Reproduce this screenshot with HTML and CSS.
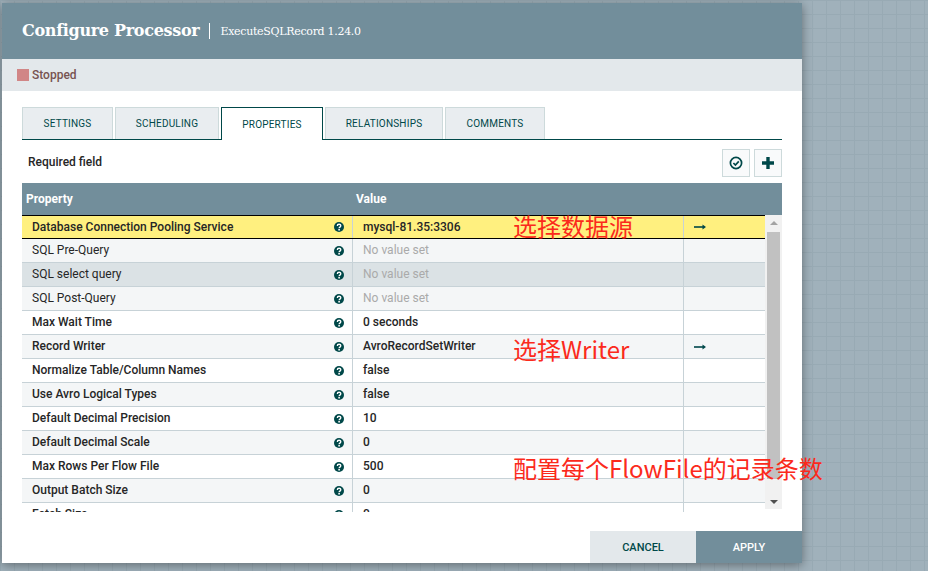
FILE: index.html
```html
<!DOCTYPE html>
<html lang="en">

<head>
    <meta charset="UTF-8">
    <meta name="viewport" content="width=device-width, initial-scale=1.0">
    <title>Configure Processor</title>
    <link rel="stylesheet" href="styles.css">
</head>

<body>
    <div class="canvas">
        <div class="dialog">
            <header class="dialog-head">
                <h1>Configure Processor</h1>
                <span class="subtitle">ExecuteSQLRecord 1.24.0</span>
            </header>
            <div class="status"><span class="status-box"></span>Stopped</div>
            <main class="dialog-body">
                <ul class="tabs">
                    <li class="tab tab-settings">SETTINGS</li>
                    <li class="tab tab-scheduling">SCHEDULING</li>
                    <li class="tab tab-properties active">PROPERTIES</li>
                    <li class="tab tab-relationships">RELATIONSHIPS</li>
                    <li class="tab tab-comments">COMMENTS</li>
                </ul>
                <div class="toolbar">
                    <span class="required">Required field</span>
                    <div class="tool-buttons">
                        <button class="tool-btn" aria-label="Verify">
                            <svg width="14" height="14" viewBox="0 0 14 14">
                                <circle cx="7" cy="7" r="5.6" fill="none" stroke="#004849" stroke-width="1.7" />
                                <path d="M4.4 7l2 2 3.4-3.6" fill="none" stroke="#004849" stroke-width="1.7" />
                            </svg>
                        </button>
                        <button class="tool-btn" aria-label="Add">
                            <svg width="14" height="14" viewBox="0 0 14 14">
                                <path d="M7 1v12M1 7h12" fill="none" stroke="#004849" stroke-width="3.4" />
                            </svg>
                        </button>
                    </div>
                </div>
                <div class="table-head">
                    <span class="head-property">Property</span>
                    <span class="head-value">Value</span>
                </div>
                <div class="table-wrap">
                    <div class="rows" id="rows">
                        <div class="row selected">
                            <div class="cell-name"><span>Database Connection Pooling Service</span><svg class="help"><use href="#help" /></svg></div>
                            <div class="cell-value">mysql-81.35:3306</div>
                            <div class="cell-action"><svg class="arrow"><use href="#arrow" /></svg></div>
                        </div>
                        <div class="row odd optional">
                            <div class="cell-name"><span>SQL Pre-Query</span><svg class="help"><use href="#help" /></svg></div>
                            <div class="cell-value unset">No value set</div>
                            <div class="cell-action"></div>
                        </div>
                        <div class="row hover optional">
                            <div class="cell-name"><span>SQL select query</span><svg class="help"><use href="#help" /></svg></div>
                            <div class="cell-value unset">No value set</div>
                            <div class="cell-action"></div>
                        </div>
                        <div class="row odd optional">
                            <div class="cell-name"><span>SQL Post-Query</span><svg class="help"><use href="#help" /></svg></div>
                            <div class="cell-value unset">No value set</div>
                            <div class="cell-action"></div>
                        </div>
                        <div class="row">
                            <div class="cell-name"><span>Max Wait Time</span><svg class="help"><use href="#help" /></svg></div>
                            <div class="cell-value">0 seconds</div>
                            <div class="cell-action"></div>
                        </div>
                        <div class="row odd">
                            <div class="cell-name"><span>Record Writer</span><svg class="help"><use href="#help" /></svg></div>
                            <div class="cell-value">AvroRecordSetWriter</div>
                            <div class="cell-action"><svg class="arrow"><use href="#arrow" /></svg></div>
                        </div>
                        <div class="row">
                            <div class="cell-name"><span>Normalize Table/Column Names</span><svg class="help"><use href="#help" /></svg></div>
                            <div class="cell-value">false</div>
                            <div class="cell-action"></div>
                        </div>
                        <div class="row odd">
                            <div class="cell-name"><span>Use Avro Logical Types</span><svg class="help"><use href="#help" /></svg></div>
                            <div class="cell-value">false</div>
                            <div class="cell-action"></div>
                        </div>
                        <div class="row">
                            <div class="cell-name"><span>Default Decimal Precision</span><svg class="help"><use href="#help" /></svg></div>
                            <div class="cell-value">10</div>
                            <div class="cell-action"></div>
                        </div>
                        <div class="row odd">
                            <div class="cell-name"><span>Default Decimal Scale</span><svg class="help"><use href="#help" /></svg></div>
                            <div class="cell-value">0</div>
                            <div class="cell-action"></div>
                        </div>
                        <div class="row">
                            <div class="cell-name"><span>Max Rows Per Flow File</span><svg class="help"><use href="#help" /></svg></div>
                            <div class="cell-value">500</div>
                            <div class="cell-action"></div>
                        </div>
                        <div class="row odd">
                            <div class="cell-name"><span>Output Batch Size</span><svg class="help"><use href="#help" /></svg></div>
                            <div class="cell-value">0</div>
                            <div class="cell-action"></div>
                        </div>
                        <div class="row">
                            <div class="cell-name"><span>Fetch Size</span><svg class="help"><use href="#help" /></svg></div>
                            <div class="cell-value">0</div>
                            <div class="cell-action"></div>
                        </div>
                    </div>
                    <div class="scrollbar">
                        <span class="scroll-up"></span>
                        <span class="scroll-thumb"></span>
                        <span class="scroll-down"></span>
                    </div>
                </div>
            </main>
            <footer class="dialog-foot">
                <button class="btn-cancel">CANCEL</button>
                <button class="btn-apply">APPLY</button>
            </footer>
        </div>

        <!-- notes drawn on top of the screenshot -->
        <span class="note note-source">选择数据源</span>
        <span class="note note-writer">选择Writer</span>
        <span class="note note-count">配置每个FlowFile的记录条数</span>
    </div>

    <svg width="0" height="0" class="defs">
        <symbol id="help" viewBox="0 0 10 10">
            <circle cx="5" cy="5" r="5" fill="#004849" />
            <path d="M3.3 3.9c0-2.2 3.5-2.2 3.5-.1 0 1.3-1.7 1.3-1.7 2.5" fill="none" stroke="#fff" stroke-width="1.3" />
            <rect x="4.3" y="7" width="1.6" height="1.5" fill="#fff" />
        </symbol>
        <symbol id="arrow" viewBox="0 0 12 8">
            <path d="M0 4h9" stroke="#004849" stroke-width="1.6" fill="none" />
            <path d="M8.5 1.5L12 4 8.5 6.5z" fill="#004849" />
        </symbol>
    </svg>
</body>

</html>
```

FILE: styles.css
```css
* {
    box-sizing: border-box;
}

body {
    margin: 0;
    font-family: Roboto, "Noto Sans CJK SC", sans-serif;
    overflow: hidden;
}

.defs {
    position: absolute;
}

.canvas {
    position: relative;
    width: 928px;
    height: 571px;
    background-color: #a0b1bb;
    background-image:
        linear-gradient(#98aab4 1px, transparent 1px),
        linear-gradient(90deg, #98aab4 1px, transparent 1px);
    background-size: 14px 14px;
    overflow: hidden;
}

.dialog {
    position: absolute;
    left: 2px;
    top: 3px;
    width: 800px;
    height: 560px;
    background: #fff;
    display: flex;
    flex-direction: column;
    box-shadow: 0 2px 10px rgba(0, 0, 0, 0.4);
}

.dialog-head {
    height: 56px;
    background: #728e9b;
    color: #fff;
    display: flex;
    align-items: center;
    padding-left: 20px;
}

.dialog-head h1 {
    margin: 0;
    font-family: "DejaVu Serif", serif;
    font-size: 16px;
    font-weight: bold;
    letter-spacing: -0.3px;
    padding-right: 10px;
    border-right: 1px solid #fff;
    line-height: 16px;
}

.subtitle {
    font-family: "DejaVu Serif", serif;
    font-size: 11px;
    letter-spacing: -0.3px;
    padding-left: 10px;
}

.status {
    height: 32px;
    background: #e3e8eb;
    display: flex;
    align-items: center;
    padding-left: 15px;
    font-size: 12px;
    font-weight: 500;
    color: #775351;
}

.status-box {
    width: 12px;
    height: 12px;
    background: #d18686;
    margin-right: 3px;
}

.dialog-body {
    flex: 1;
    padding: 16px 20px 0;
    min-height: 0;
}

.tabs {
    list-style: none;
    margin: 0;
    padding: 0;
    display: flex;
    gap: 2px;
    height: 33px;
    border-bottom: 1px solid #004849;
}

.tab {
    height: 32px;
    background: #e9edf0;
    border: 1px solid #cddadb;
    border-bottom: 0;
    color: #004849;
    font-size: 10px;
    letter-spacing: 0.2px;
    display: flex;
    align-items: center;
    justify-content: center;
}

.tab-settings {
    width: 91px;
}

.tab-scheduling {
    width: 104px;
}

.tab-properties {
    width: 102px;
}

.tab-relationships {
    width: 118px;
}

.tab-comments {
    width: 100px;
}

.tab.active {
    height: 33px;
    background: #fff;
    border: 1px solid #004849;
    border-bottom: 0;
}

.toolbar {
    height: 43px;
    display: flex;
    align-items: center;
    justify-content: space-between;
    padding: 0 0 8px 6px;
}

.required {
    font-size: 12px;
    font-weight: 500;
    color: #262626;
    padding-top: 8px;
}

.tool-buttons {
    display: flex;
    gap: 4px;
    padding-top: 10px;
}

.tool-btn {
    width: 28px;
    height: 28px;
    padding: 0;
    background: #f9fafb;
    border: 1px solid #cddadb;
    display: flex;
    align-items: center;
    justify-content: center;
}

.table-head {
    height: 32px;
    background: #728e9b;
    color: #fff;
    font-size: 12px;
    font-weight: 700;
    display: flex;
    align-items: center;
}

.head-property {
    width: 334px;
    padding-left: 4px;
}

.table-wrap {
    height: 297px;
    display: flex;
    overflow: hidden;
}

.rows {
    width: 743px;
}

.row {
    height: 24px;
    display: flex;
    background: #fff;
    border-bottom: 1px solid #c7d2d7;
    font-size: 12px;
    font-weight: 500;
    color: #262626;
    line-height: 23px;
}

.row.odd {
    background: #f4f6f7;
}

.row.hover {
    background: #dbe2e5;
}

.row.selected {
    background: #fff07f;
    border-top: 1px solid #000;
    border-bottom: 1px solid #000;
    line-height: 22px;
}

.row.optional .cell-name span {
    font-weight: 400;
}

.cell-name {
    width: 330px;
    display: flex;
    justify-content: space-between;
    align-items: center;
    padding: 0 8px 0 10px;
}

.cell-value {
    width: 331px;
    padding-left: 10px;
    border-left: 1px solid #c7d2d7;
}

.cell-value.unset {
    color: #aaa;
    font-weight: 400;
}

.cell-action {
    flex: 1;
    border-left: 1px solid #c7d2d7;
    padding-left: 10px;
    display: flex;
    align-items: center;
}

.help {
    width: 10px;
    height: 10px;
}

.arrow {
    width: 12px;
    height: 8px;
}

.scrollbar {
    width: 17px;
    height: 294px;
    background: #f1f1f1;
    display: flex;
    flex-direction: column;
    align-items: center;
}

.scroll-up {
    margin-top: 6px;
    border: 4px solid transparent;
    border-top: 0;
    border-bottom: 4px solid #a3a3a3;
}

.scroll-thumb {
    width: 13px;
    height: 247px;
    margin-top: 7px;
    background: #c1c1c1;
}

.scroll-down {
    margin-top: 21px;
    border: 4px solid transparent;
    border-bottom: 0;
    border-top: 4px solid #505050;
}

.dialog-foot {
    height: 32px;
    display: flex;
    justify-content: flex-end;
}

.dialog-foot button {
    width: 106px;
    border: 0;
    font-family: inherit;
    font-size: 11px;
    font-weight: 500;
}

.btn-cancel {
    background: #e3e8eb;
    color: #004849;
}

.btn-apply {
    background: #728e9b;
    color: #fff;
}

.note {
    position: absolute;
    left: 513px;
    color: #fb2a1c;
    font-size: 24px;
    line-height: 30px;
    white-space: nowrap;
    font-family: "Noto Sans CJK SC", sans-serif;
}

.note-source {
    top: 211px;
}

.note-writer {
    top: 334px;
}

.note-count {
    top: 453px;
}
```
